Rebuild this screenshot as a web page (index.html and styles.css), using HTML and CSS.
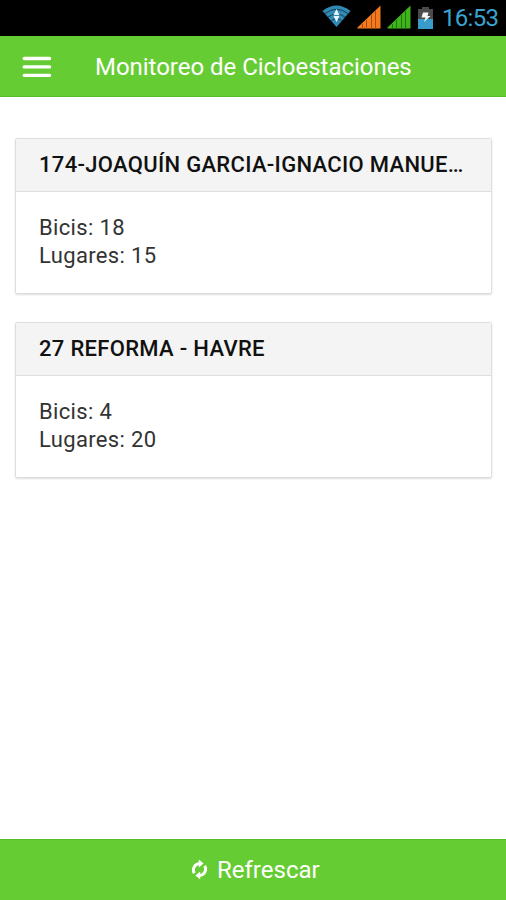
FILE: index.html
```html
<!DOCTYPE html>
<html lang="es">
<head>
<meta charset="utf-8">
<title>Monitoreo de Cicloestaciones</title>
<link rel="stylesheet" href="styles.css">
</head>
<body>
<div class="statusbar">
  <svg class="status-icons" width="120" height="36" viewBox="0 0 120 36">
    <path fill="#3189b5" d="M6.500 11Q20.500 0 34.500 11L20.500 27Z"/>
    <path fill="none" stroke="#153c50" stroke-width="1" d="M9 13.500Q20.500 5 32 13.500M12 17Q20.500 11 29 17M15.500 20.500Q20.500 17 25.500 20.500"/>
    <path fill="#e4f5fc" d="M20.500 9l3 6h-6zM20.500 22l3-6h-6z"/>
    <path fill="#f47a20" d="M41.500 28.500v-1L64.500 5.500v23z"/>
    <path stroke="#a84c10" stroke-width="1" d="M46.500 24v5M50.500 20v9M55.500 15v14M59.500 11v18"/>
    <path fill="#3fb51b" d="M71.500 28.500v-1L94.500 5.500v23z"/>
    <path stroke="#23740e" stroke-width="1" d="M76.500 24v5M80.500 20v9M85.500 15v14M89.500 11v18"/>
    <path fill="#4b4b4b" d="M106 7h7v2h4v11h-15V9h4z"/>
    <path fill="#399bc9" d="M102 19h15v10h-15z"/>
    <path fill="#f5f9fb" d="M107 12.500h5.500l-1 3.500h3l-6.500 6 1.500-4.500h-4z"/>
  </svg>
  <span class="clock">16:53</span>
</div>
<header class="header">
  <svg class="menu" width="30" height="22" viewBox="0 0 30 22">
    <path stroke="#fff" stroke-width="3.300" stroke-linecap="round" d="M2.200 2.500h25.400M2.200 10.900h25.400M2.200 19.300h25.400"/>
  </svg>
  <h1 class="title">Monitoreo de Cicloestaciones</h1>
</header>
<main class="content">
  <section class="card">
    <h2 class="card-title">174-JOAQUÍN GARCIA-IGNACIO MANUE…</h2>
    <div class="card-body"><p class="row">Bicis: 18</p><p class="row">Lugares: 15</p></div>
  </section>
  <section class="card">
    <h2 class="card-title">27 REFORMA - HAVRE</h2>
    <div class="card-body"><p class="row">Bicis: 4</p><p class="row">Lugares: 20</p></div>
  </section>
</main>
<footer class="footer">
  <svg class="refresh" width="18" height="22" viewBox="0 0 18 22">
    <path fill="none" stroke="#fff" stroke-width="3" d="M3.300 14.200A6.500 6.500 0 0 1 8.500 4.500M13.700 6.800A6.500 6.500 0 0 1 8.500 16.500"/>
    <path fill="#fff" d="M7.800 .5l4.800 4-4.800 4zM9.200 12.500v8l-4.800-4z"/>
  </svg>
  <span class="footer-label">Refrescar</span>
</footer>
</body>
</html>
```

FILE: styles.css
```css
* { box-sizing: border-box; }
body {
  margin: 0;
  height: 900px;
  display: flex;
  flex-direction: column;
  overflow: hidden;
  background: #fff;
  font-family: Roboto, "Liberation Sans", sans-serif;
  color: #333;
}
h1, h2, p { margin: 0; }
.statusbar {
  height: 36px;
  display: flex;
  justify-content: flex-end;
  padding-right: 8px;
  background: #000;
}
.clock {
  width: 56px;
  margin-left: 6px;
  font-size: 24px;
  line-height: 37px;
  letter-spacing: -0.7px;
  color: #3ba3d0;
  white-space: nowrap;
}
.header {
  height: 61px;
  display: flex;
  align-items: center;
  padding: 2px 0 0 22px;
  background: #66cc33;
  border-bottom: 1px solid #5abb29;
}
.title {
  margin-left: 43px;
  font-size: 24px;
  font-weight: 400;
  line-height: 30px;
  letter-spacing: -0.03px;
  color: #fff;
  white-space: nowrap;
}
.content {
  flex: 1;
  display: flex;
  flex-direction: column;
  gap: 28px;
  margin: 0 -1px;
  padding: 41px 14px 0 15px;
  border: solid #fafafa;
  border-width: 0 1px;
}
.card {
  height: 156px;
  border: 1px solid #dedede;
  border-radius: 2px;
  box-shadow: 0 1px 2px rgba(0, 0, 0, 0.14);
}
.card-title {
  height: 53px;
  padding: 0 23px;
  background: #f4f4f4;
  border-bottom: 1px solid #dedede;
  font-size: 22px;
  font-weight: 500;
  line-height: 51px;
  letter-spacing: 0.31px;
  color: #111;
  white-space: nowrap;
}
.card-body { padding: 22px 23px; }
.row {
  font-size: 22px;
  line-height: 28px;
  letter-spacing: 0.35px;
}
.footer {
  height: 61px;
  display: flex;
  align-items: center;
  padding-left: 191px;
  background: #66cc33;
  border-top: 1px solid #5abb29;
}
.footer-label {
  margin-left: 8px;
  font-size: 24px;
  letter-spacing: 0;
  color: #fff;
}
```
